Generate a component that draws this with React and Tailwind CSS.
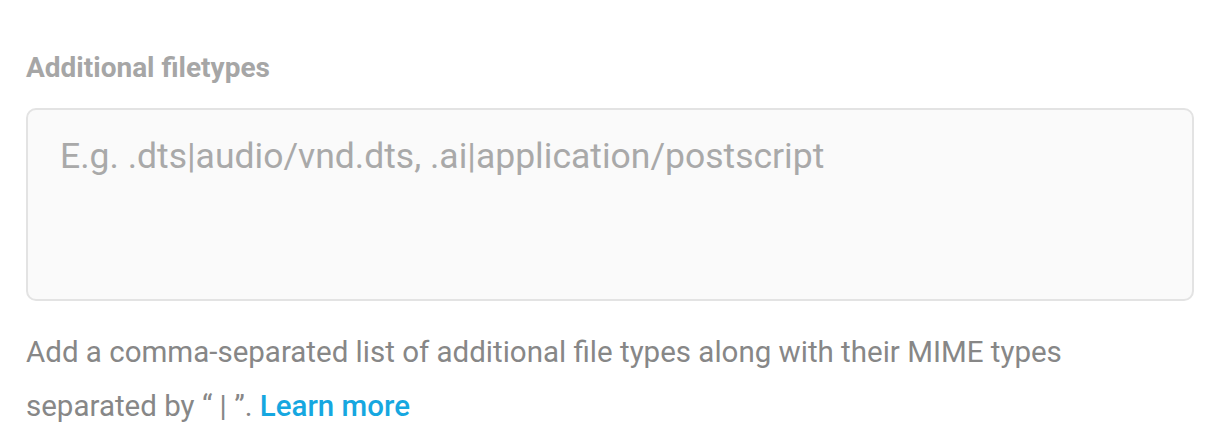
import React from 'react'

export default function App() {
  return (
    <div className="w-[1220px] h-[444px] bg-white px-[26px] pt-[50px]" style={{ fontFamily: 'Roboto, "Liberation Sans", sans-serif' }}>
      <label className="block text-[28px] leading-[36px] font-bold text-[#a6a6a6]">Additional filetypes</label>
      <textarea
        className="mt-[22px] block w-full h-[193px] resize-none rounded-[10px] border-2 border-[#e3e3e3] bg-[#fafafa] px-[32px] py-[25px] text-[35.5px] leading-[42px] text-[#555] placeholder:text-[#a9a9a9] outline-none"
        placeholder="E.g. .dts|audio/vnd.dts, .ai|application/postscript"
      />
      <p className="mt-[24px] text-[29.5px] leading-[54px] text-[#878787]">
        Add a comma-separated list of additional file types along with their MIME types separated by “ | ”.{' '}
        <a href="#" className="font-medium text-[#16a7e0]">Learn more</a>
      </p>
    </div>
  )
}
